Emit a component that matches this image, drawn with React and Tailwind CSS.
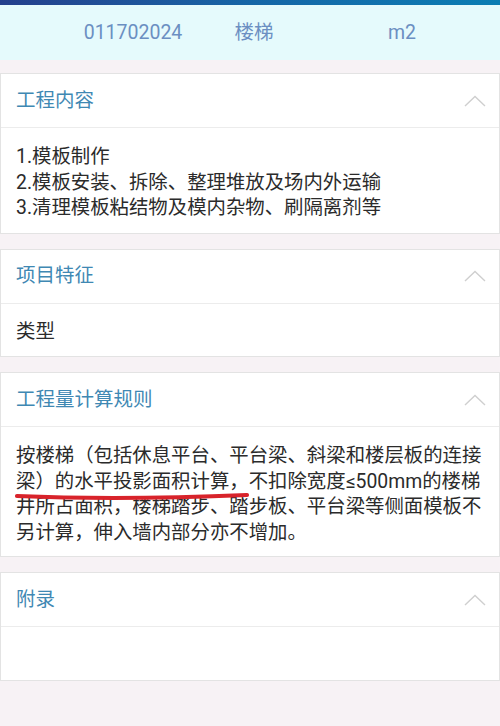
import React from 'react';

const font = { fontFamily: 'Roboto, "Noto Sans CJK SC", sans-serif' };

// Thin up-chevron drawn on the right of each section header
function Chevron() {
  return (
    <svg width="22" height="12" viewBox="0 0 22 12" className="shrink-0">
      <path d="M1 11 L11 1.5 L21 11" fill="none" stroke="#cfcfcf" strokeWidth="1.4" />
    </svg>
  );
}

function Section({ title, children, bodyClass = 'pt-4 pb-3' }) {
  return (
    <div className="bg-white border border-[#e3e3e3]">
      <div className="h-[54px] flex items-center justify-between pl-[15px] pr-[13px] border-b border-[#ececec]">
        <span className="text-[19.5px] text-[#3f88b3]">{title}</span>
        <Chevron />
      </div>
      <div className={`relative px-[15px] text-[19.4px] leading-[25.5px] text-[#2b2b2b] ${bodyClass}`}>
        {children}
      </div>
    </div>
  );
}

export default function App() {
  return (
    <div className="min-h-[726px] bg-[#f7f2f5]" style={font}>
      <div className="h-[5px] bg-gradient-to-r from-[#233f8c] via-[#1565a6] to-[#0a7db3]" />
      <div className="h-[55px] bg-[#e5fafc] flex items-center pl-[73px] text-[19.5px] text-[#6b8fc2]">
        <span className="w-[120px] text-center">011702024</span>
        <span className="w-[122px] text-center">楼梯</span>
        <span className="w-[174px] text-center">m2</span>
      </div>

      <div className="flex flex-col gap-[15px] pt-[13px]">
        <Section title="工程内容" bodyClass="pt-[16px] pb-[12px]">
          <div className="whitespace-nowrap">1.模板制作</div>
          <div className="whitespace-nowrap">2.模板安装、拆除、整理堆放及场内外运输</div>
          <div className="whitespace-nowrap">3.清理模板粘结物及模内杂物、刷隔离剂等</div>
        </Section>

        <Section title="项目特征" bodyClass="pt-[15px] pb-[12px]">
          <div>类型</div>
        </Section>

        <Section title="工程量计算规则" bodyClass="pt-[16px] pb-[11px]">
          <div className="whitespace-nowrap">按楼梯（包括休息平台、平台梁、斜梁和楼层板的连接</div>
          <div className="whitespace-nowrap">梁）的水平投影面积计算，不扣除宽度≤500mm的楼梯</div>
          <div className="whitespace-nowrap">井所占面积，楼梯踏步、踏步板、平台梁等侧面模板不</div>
          <div className="whitespace-nowrap">另计算，伸入墙内部分亦不增加。</div>
          {/* hand-drawn red marker stroke under the second line */}
          <svg
            className="absolute left-[13px] top-[64px] pointer-events-none"
            width="236"
            height="10"
            viewBox="0 0 236 10"
          >
            <path
              d="M3 5 C60 7.5 150 7.5 233 4"
              fill="none"
              stroke="#d8232b"
              strokeWidth="4.2"
              strokeLinecap="round"
            />
          </svg>
        </Section>

        <Section title="附录" bodyClass="h-[53px]">
          <div />
        </Section>
      </div>
    </div>
  );
}
